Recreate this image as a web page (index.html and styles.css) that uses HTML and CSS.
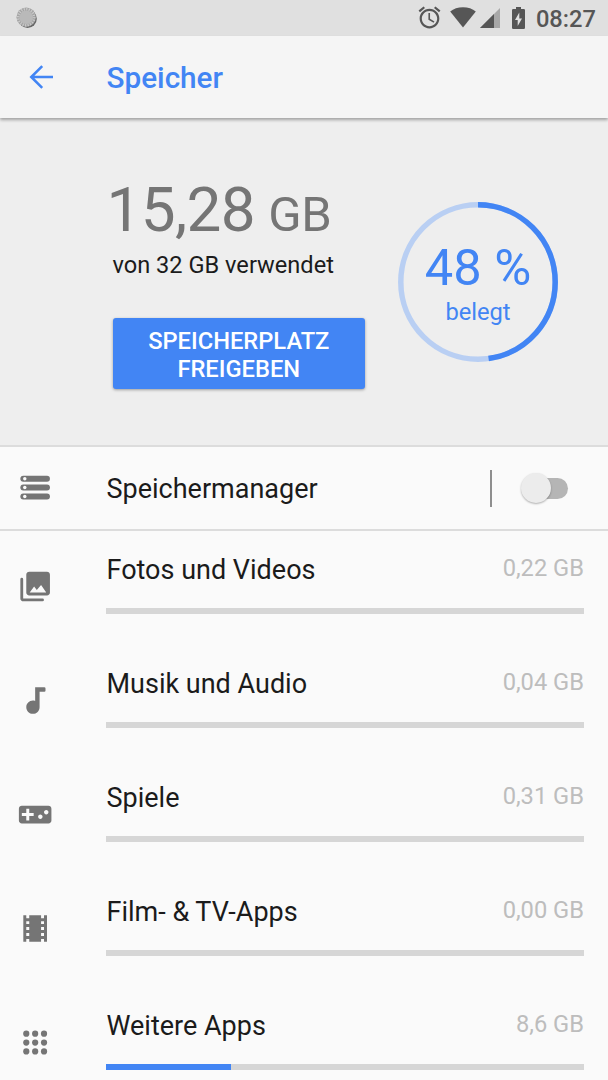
FILE: index.html
```html
<!DOCTYPE html>
<html lang="de">
<head>
<meta charset="utf-8">
<title>Speicher</title>
<link rel="stylesheet" href="styles.css">
</head>
<body>
<div class="status">
  <svg class="spinner" width="22" height="22" viewBox="0 0 22 22"><circle cx="11.6" cy="11.8" r="9.2" fill="#666"/><circle cx="10.2" cy="10.2" r="9.7" fill="#a4a4a4"/><circle cx="10.2" cy="10.2" r="8" fill="none" stroke="#ccc" stroke-width="2.6" stroke-dasharray="1.1 1.4"/><circle cx="10.2" cy="10.2" r="6.8" fill="#b9b9b9"/></svg>
  <div class="status-right">
    <svg class="alarm" width="23" height="23" viewBox="1.5 1.5 21 21"><path d="M22 5.72l-4.6-3.86-1.29 1.53 4.6 3.86L22 5.72zM7.88 3.39L6.6 1.86 2 5.71l1.29 1.53 4.59-3.85zM12.5 8H11v6l4.75 2.85.75-1.23-4-2.37V8zM12 4c-4.97 0-9 4.03-9 9s4.02 9 9 9c4.97 0 9-4.03 9-9s-4.03-9-9-9zm0 16c-3.87 0-7-3.13-7-7s3.13-7 7-7 7 3.13 7 7-3.13 7-7 7z"/></svg>
    <svg class="wifi" width="26" height="21" viewBox="0 0 26 21"><path d="M13 20.5.2 4.500C3.500 1.700 8 .2 13 .2s9.500 1.500 12.800 4.300z"/></svg>
    <svg class="signal" width="20" height="20" viewBox="0 0 20 20"><path d="M0 20 20 0v20z" opacity=".4"/><path d="M0 20 14 6v14z"/></svg>
    <svg class="battery" width="13" height="22" viewBox="0 0 13 22"><path fill-rule="evenodd" d="M4 0h5v2h2.800q1.200 0 1.200 1.200v17.600q0 1.200-1.200 1.200H1.200Q0 22 0 20.800V3.200Q0 2 1.200 2H4zM7.300 5.500 3 13h2.700v6L10 11.500H7.300z"/></svg>
    <span class="clock">08:27</span>
  </div>
</div>
<header class="appbar">
  <svg class="back" width="36" height="36" viewBox="0 0 24 24"><path d="M20 11.100H7.600l5.800-5.800L12.200 4.100l-7.900 7.900 7.900 7.900 1.200-1.200-5.800-5.800H20z"/></svg>
  <h1>Speicher</h1>
</header>
<section class="summary">
  <div class="usage">
    <div class="amount">15,28 <span class="unit">GB</span></div>
    <div class="total">von 32 GB verwendet</div>
    <button class="free">SPEICHERPLATZ<br>FREIGEBEN</button>
  </div>
  <div class="donut">
    <svg class="ring" width="160" height="160" viewBox="0 0 160 160"><circle cx="80" cy="80" r="77.200" stroke="#b9cff3"/><circle cx="80" cy="80" r="77.200" stroke="#4285f4" pathLength="100" stroke-dasharray="47.800 100" transform="rotate(-90 80 80)"/></svg>
    <div class="reading">
      <div class="percent">48 %</div>
      <div class="used">belegt</div>
    </div>
  </div>
</section>
<section class="manager">
  <svg class="icon" viewBox="0 0 24 24"><rect x="2" y="4" width="20" height="4" rx="2"/><rect x="2" y="10" width="20" height="4" rx="2"/><rect x="2" y="16" width="20" height="4" rx="2"/><g fill="#fafafa"><circle cx="5" cy="6" r="1.150"/><circle cx="5" cy="12" r="1.150"/><circle cx="5" cy="18" r="1.150"/></g></svg>
  <span class="name">Speichermanager</span>
  <span class="separator"></span>
  <span class="switch"><span class="thumb"></span></span>
</section>
<main>
  <div class="row">
    <svg class="icon" viewBox="0 0 24 24"><path d="M22 16V4c0-1.100-.9-2-2-2H8c-1.100 0-2 .9-2 2v12c0 1.100.9 2 2 2h12c1.100 0 2-.9 2-2zM8.300 16l3-4 1.800 2.300L16 11l3.500 5zM2 7v13c0 1.100.9 2 2 2h13a.9.9 0 0 0 0-1.900H3.900V7A.9.9 0 0 0 2 7z"/></svg>
    <div class="body"><div class="line"><span class="name">Fotos und Videos</span><span class="size">0,22 GB</span></div><div class="bar"></div></div>
  </div>
  <div class="row">
    <svg class="icon" viewBox="0 0 24 24"><path d="M12 3v9.260c-.5-.17-1-.26-1.500-.26C8 12 6 14 6 16.500S8 21 10.500 21s4.500-2 4.500-4.500V6h3.200q.8 0 .8-.8V3.800q0-.8-.8-.8z"/></svg>
    <div class="body"><div class="line"><span class="name">Musik und Audio</span><span class="size">0,04 GB</span></div><div class="bar"></div></div>
  </div>
  <div class="row">
    <svg class="icon" viewBox="0 0 24 24"><path d="M21 6H3c-1.100 0-2 .9-2 2v8c0 1.100.9 2 2 2h18c1.100 0 2-.9 2-2V8c0-1.100-.9-2-2-2zm-10 7H8v3H6v-3H3v-2h3V8h2v3h3v2zm4.500 2c-.830 0-1.500-.670-1.500-1.500s.670-1.500 1.500-1.500 1.500.670 1.500 1.500-.670 1.500-1.500 1.500zm4-3c-.830 0-1.500-.670-1.500-1.500S18.670 9 19.500 9s1.500.670 1.500 1.500-.670 1.500-1.500 1.500z"/></svg>
    <div class="body"><div class="line"><span class="name">Spiele</span><span class="size">0,31 GB</span></div><div class="bar"></div></div>
  </div>
  <div class="row">
    <svg class="icon" viewBox="0 0 24 24"><path d="M18 3v2h-2V3H8v2H6V3H4v18h2v-2h2v2h8v-2h2v2h2V3h-2zM8 17H6v-2h2v2zm0-4H6v-2h2v2zm0-4H6V7h2v2zm10 8h-2v-2h2v2zm0-4h-2v-2h2v2zm0-4h-2V7h2v2z"/></svg>
    <div class="body"><div class="line"><span class="name">Film- &amp; TV-Apps</span><span class="size">0,00 GB</span></div><div class="bar"></div></div>
  </div>
  <div class="row">
    <svg class="icon" viewBox="0 0 24 24"><g><circle cx="6" cy="6" r="2.100"/><circle cx="12" cy="6" r="2.100"/><circle cx="18" cy="6" r="2.100"/><circle cx="6" cy="12" r="2.100"/><circle cx="12" cy="12" r="2.100"/><circle cx="18" cy="12" r="2.100"/><circle cx="6" cy="18" r="2.100"/><circle cx="12" cy="18" r="2.100"/><circle cx="18" cy="18" r="2.100"/></g></svg>
    <div class="body"><div class="line"><span class="name">Weitere Apps</span><span class="size">8,6 GB</span></div><div class="bar"><div class="fill" style="width:26.100%"></div></div></div>
  </div>
</main>
</body>
</html>
```
FILE: styles.css
```css
* { box-sizing: border-box; }
body {
  margin: 0;
  width: 608px;
  height: 1080px;
  overflow: hidden;
  background: #fafafa;
  color: #1b1b1b;
  font-family: Roboto, "Liberation Sans", sans-serif;
}
svg { display: block; flex: none; }
.status {
  height: 35.500px;
  background: #e0e0e0;
  display: flex;
  justify-content: space-between;
  padding: 0 12px 0 16px;
}
.spinner { margin-top: 7px; }
.status-right { display: flex; fill: #565656; color: #565656; }
.alarm { margin: 6px 9px 0 0; }
.wifi { margin: 7px 4px 0 0; }
.signal { margin: 8px 12px 0 0; }
.battery { margin: 7px 11px 0 0; }
.clock { font-size: 23.700px; font-weight: 500; line-height: 38px; }
.appbar {
  position: relative;
  height: 82.500px;
  background: #f5f5f5;
  box-shadow: 0 2px 3px rgba(0, 0, 0, .32);
  clip-path: inset(0 0 -6px 0);
  display: flex;
  align-items: center;
  padding-left: 23px;
}
.back { fill: #4285f4; }
.appbar h1 {
  margin: 1px 0 0 47.500px;
  font-size: 29.700px;
  font-weight: 500;
  color: #4285f4;
}
.summary {
  height: 329px;
  background: #eee;
  border-bottom: 2px solid #dcdcdc;
  display: flex;
  padding: 60px 50px 0 106.500px;
  justify-content: space-between;
}
.amount {
  font-size: 62px;
  line-height: 64px;
  letter-spacing: -.6px;
  color: #757575;
  white-space: nowrap;
}
.unit { font-size: 49px; margin-left: -1.500px; }
.total {
  margin: 3px 0 0 6px;
  font-size: 23.600px;
  line-height: 30px;
}
.free {
  display: block;
  width: 252.500px;
  height: 71px;
  margin: 38px 0 0 6px;
  padding: 3px 0 0;
  border: 0;
  border-radius: 3px;
  background: #4285f4;
  color: #fff;
  font: 500 23.700px/28px Roboto, "Liberation Sans", sans-serif;
  box-shadow: 0 1px 3px rgba(0, 0, 0, .35);
}
.donut {
  width: 160px;
  height: 160px;
  margin-top: 24px;
  display: grid;
  text-align: center;
  color: #4285f4;
}
.ring { grid-area: 1 / 1; fill: none; stroke-width: 5.500px; }
.reading { grid-area: 1 / 1; padding-top: 36px; }
.percent { font-size: 50.600px; line-height: 60px; }
.used { font-size: 23.700px; line-height: 28px; }
.manager {
  height: 84px;
  border-bottom: 2px solid #dcdcdc;
  display: flex;
  align-items: center;
  padding: 0 40px 0 17.400px;
}
.icon { width: 35.500px; height: 35.500px; fill: #757575; transform: translate(.4px, -.2px); }
.name { font-size: 27px; line-height: 32px; white-space: nowrap; }
.manager .name { margin-left: 53.600px; padding-top: 2px; flex: 1; }
.separator { width: 2px; height: 37px; background: #8e8e8e; margin-right: 37px; }
.switch {
  width: 39px;
  height: 21px;
  border-radius: 11px;
  background: #b5b5b5;
  position: relative;
}
.thumb {
  position: absolute;
  left: -8px;
  top: -5px;
  width: 30px;
  height: 30px;
  border-radius: 50%;
  background: #ececec;
  box-shadow: 0 1px 2px rgba(0, 0, 0, .3);
}
.row {
  height: 114.120px;
  display: flex;
  padding: 0 24px 0 17.400px;
}
.row .icon { margin-top: 37.500px; }
.body { flex: 1; margin-left: 53.600px; padding-top: 23px; }
.line { display: flex; justify-content: space-between; height: 54px; }
.size { font-size: 23.700px; line-height: 28px; color: #bdbdbd; }
.bar { height: 6px; background: #d6d6d6; }
.fill { height: 100%; background: #4285f4; }
```
